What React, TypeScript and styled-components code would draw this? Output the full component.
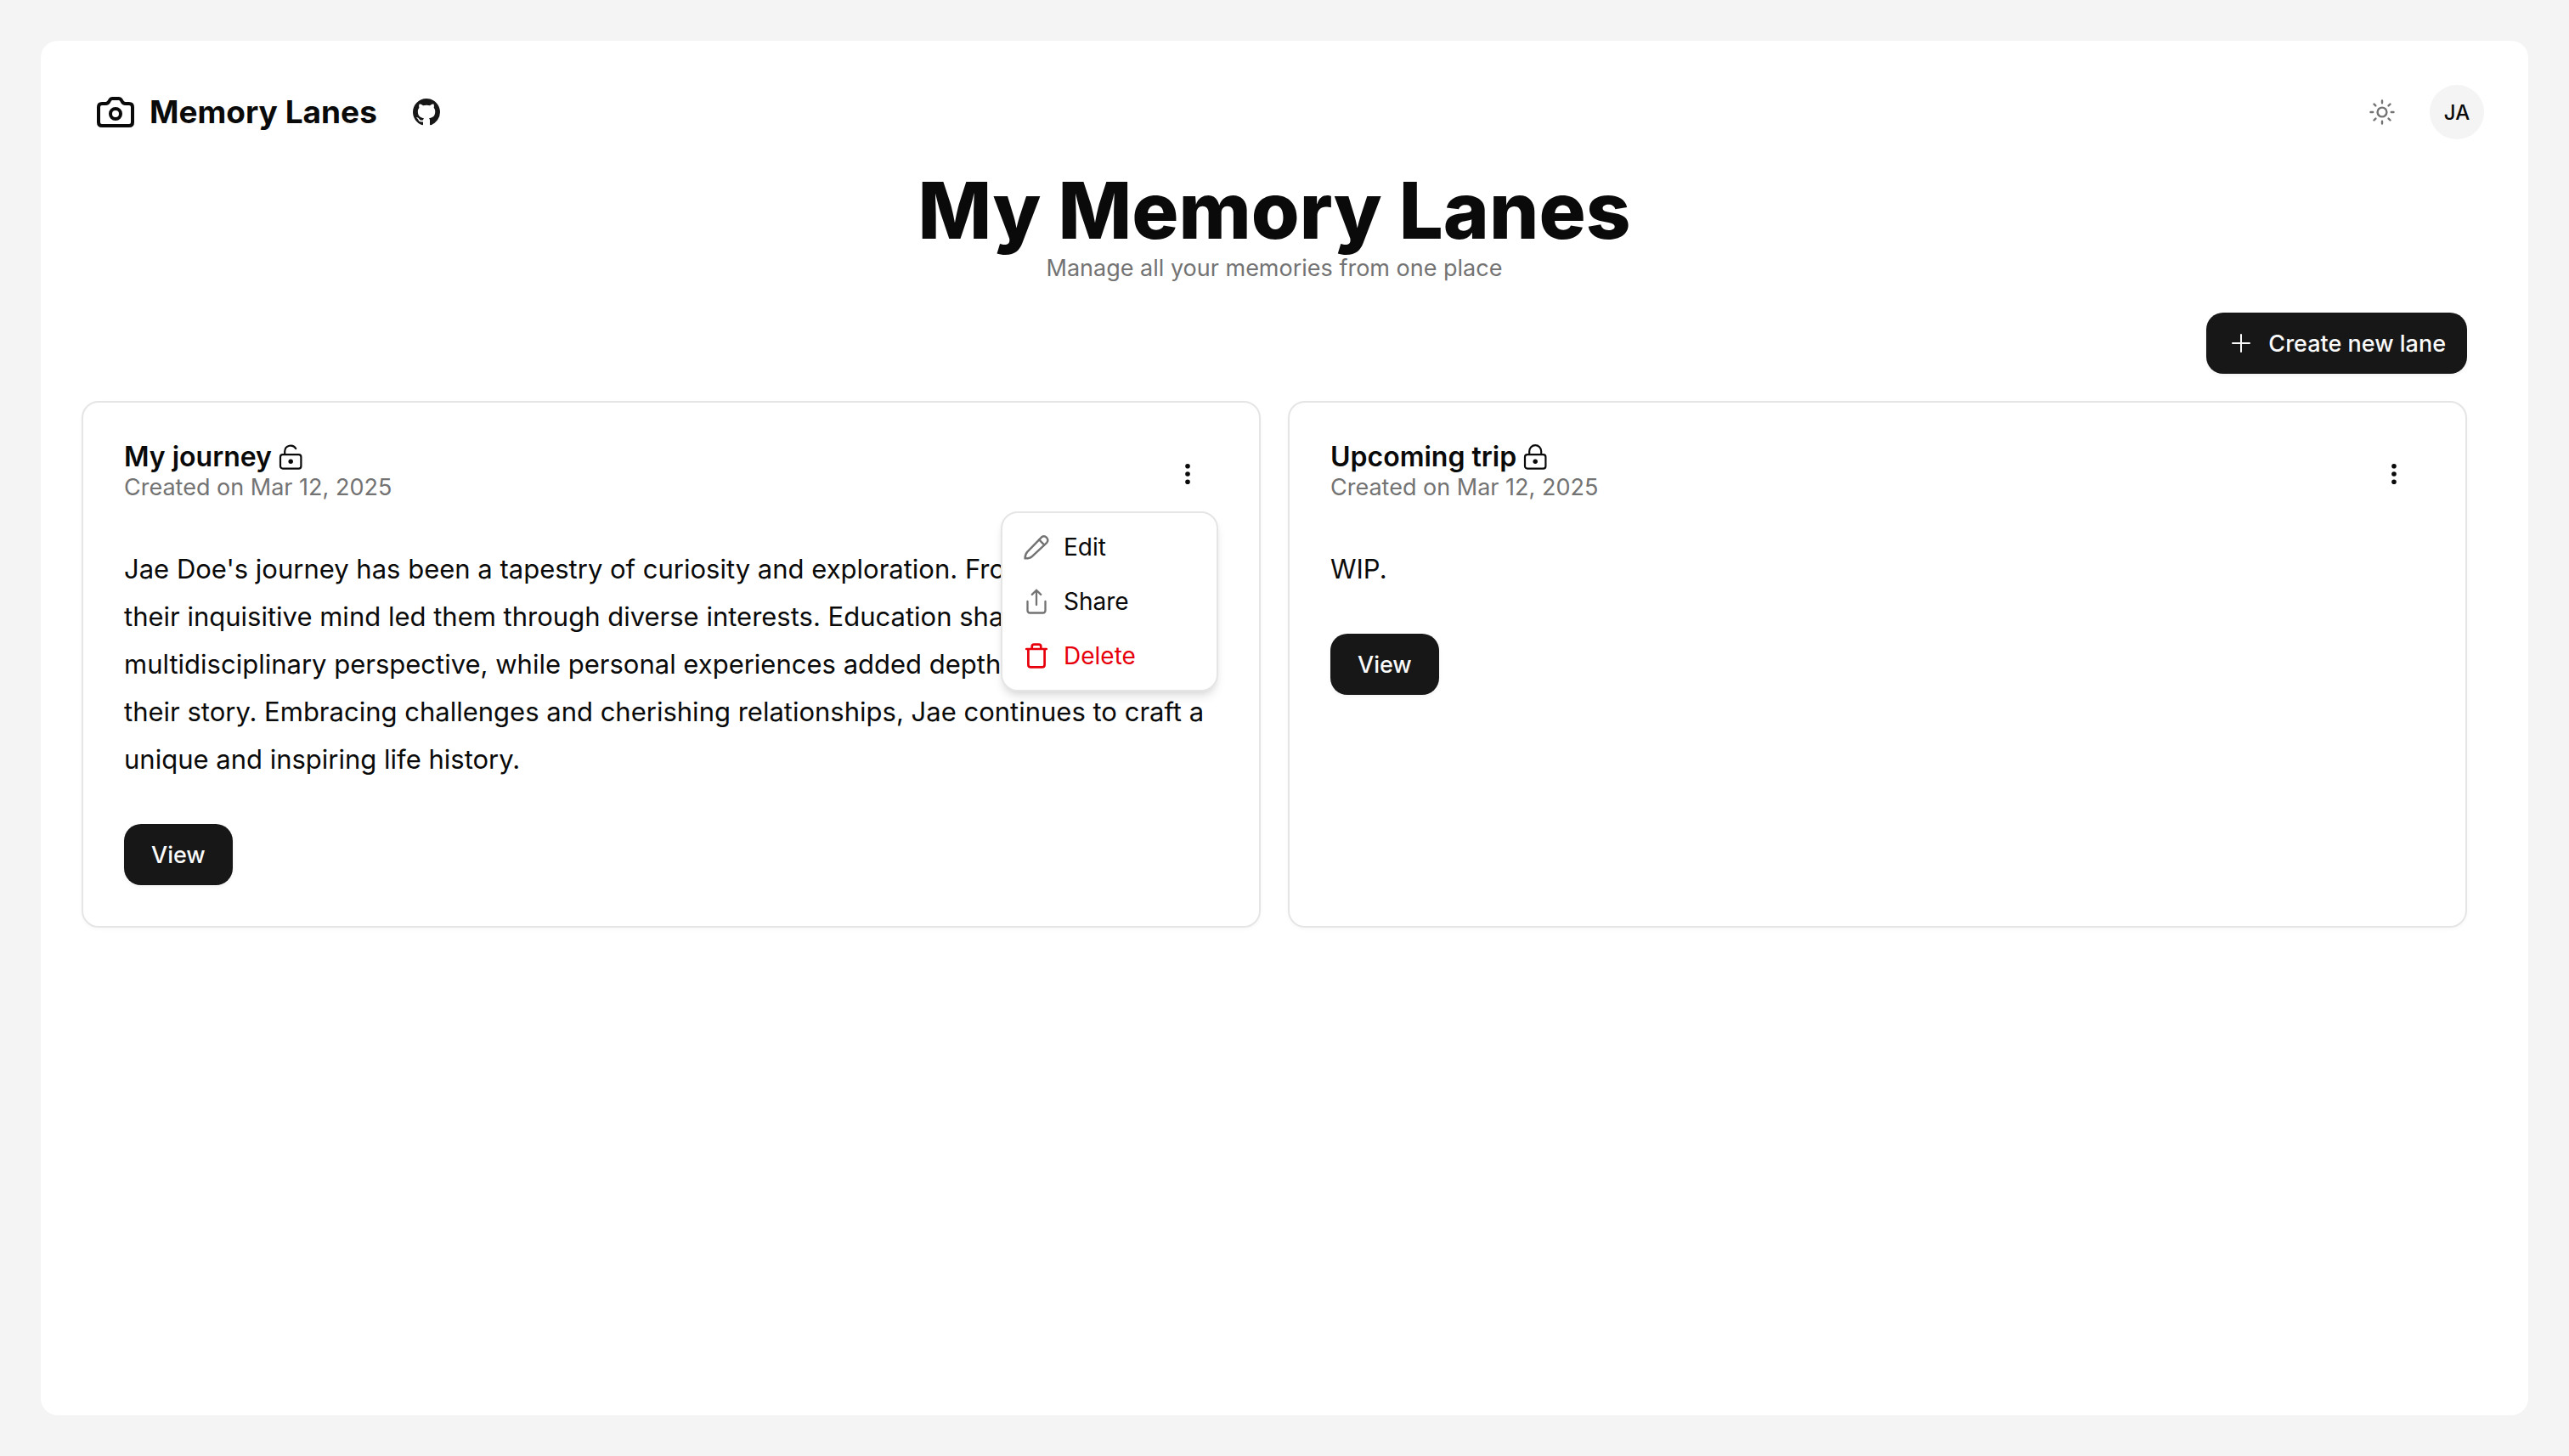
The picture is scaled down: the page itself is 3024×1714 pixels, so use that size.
import React from "react";
import styled, { createGlobalStyle } from "styled-components";

const color = {
  page: "#f4f4f4",
  surface: "#ffffff",
  ink: "#0a0a0a",
  primary: "#171717",
  onPrimary: "#fafafa",
  muted: "#737373",
  line: "#e5e5e5",
  danger: "#e7000b",
};

const GlobalStyle = createGlobalStyle`
  *, *::before, *::after { box-sizing: border-box; }
  body {
    margin: 0;
    background: ${color.page};
    color: ${color.ink};
    font-family: Inter, "Liberation Sans", sans-serif;
    -webkit-font-smoothing: antialiased;
  }
  h1, h2, p, ul { margin: 0; padding: 0; }
  button { font: inherit; color: inherit; border: 0; background: none; cursor: pointer; }
  svg { display: block; flex: none; }
`;

const Page = styled.div`
  display: flex;
  min-height: 100vh;
  padding: 48px;
`;

const Panel = styled.div`
  flex: 1;
  min-width: 0;
  background: ${color.surface};
  border-radius: 20px;
`;

const Header = styled.header`
  display: flex;
  align-items: center;
  justify-content: space-between;
  padding: 52px 52px 36px 66px;
`;

const HeaderGroup = styled.div<{ $gap: number }>`
  display: flex;
  align-items: center;
  gap: ${(p) => p.$gap}px;
`;

const Brand = styled.a`
  display: flex;
  align-items: center;
  gap: 18px;
  color: ${color.ink};
  font-size: 37px;
  line-height: 48px;
  font-weight: 700;
  text-decoration: none;
`;

const IconLink = styled.a`
  color: ${color.primary};
`;

const ThemeButton = styled.button`
  display: grid;
  place-items: center;
  width: 64px;
  height: 64px;
  padding: 0;
  color: ${color.muted};
`;

const Avatar = styled.button`
  width: 64px;
  height: 64px;
  padding: 0;
  border-radius: 50%;
  background: ${color.page};
  font-size: 24px;
  font-weight: 500;
`;

const Main = styled.main`
  display: flex;
  flex-direction: column;
  gap: 32px;
  padding: 0 72px 48px 48px;
`;

const Intro = styled.div`
  text-align: center;
`;

const PageTitle = styled.h1`
  font-size: 92px;
  line-height: 96px;
  font-weight: 800;
`;

const Subtle = styled.p`
  color: ${color.muted};
  font-size: 27px;
  line-height: 40px;
`;

const PrimaryButton = styled.button<{ $pad: number }>`
  display: inline-flex;
  align-items: center;
  gap: 16px;
  height: 72px;
  padding: 0 ${(p) => p.$pad}px;
  border-radius: 20px;
  background: ${color.primary};
  color: ${color.onPrimary};
  font-size: 27px;
  font-weight: 500;
  box-shadow: 0 2px 4px rgba(0, 0, 0, 0.05);
`;

const Actions = styled.div`
  display: flex;
  justify-content: flex-end;
`;

const Grid = styled.section`
  display: grid;
  grid-template-columns: repeat(2, minmax(0, 1fr));
  gap: 32px;
`;

const Card = styled.article`
  display: flex;
  flex-direction: column;
  align-items: flex-start;
  gap: 48px;
  padding: 48px;
  border: 2px solid ${color.line};
  border-radius: 20px;
  box-shadow: 0 2px 4px rgba(0, 0, 0, 0.03);
`;

const CardHeader = styled.div`
  position: relative;
  display: flex;
  justify-content: space-between;
  align-self: stretch;
`;

const CardTitle = styled.h2`
  display: flex;
  align-items: center;
  gap: 8px;
  font-size: 32px;
  line-height: 32px;
  font-weight: 600;
`;

const MoreButton = styled.button`
  display: grid;
  place-items: center;
  width: 72px;
  height: 72px;
  padding: 0;
`;

const CardText = styled.p`
  font-size: 31px;
  line-height: 56px;
`;

const Menu = styled.ul`
  position: absolute;
  top: calc(100% + 8px);
  right: 0;
  width: 256px;
  padding: 8px;
  list-style: none;
  background: ${color.surface};
  border: 2px solid ${color.line};
  border-radius: 20px;
  box-shadow: 0 8px 12px -2px rgba(0, 0, 0, 0.1), 0 4px 8px -4px rgba(0, 0, 0, 0.1);
`;

const MenuItem = styled.button<{ $danger?: boolean }>`
  display: flex;
  align-items: center;
  gap: 16px;
  width: 100%;
  height: 64px;
  padding: 0 16px;
  font-size: 28px;
  color: ${(p) => (p.$danger ? color.danger : color.ink)};
  svg { color: ${(p) => (p.$danger ? color.danger : color.muted)}; }
`;

const stroke = {
  fill: "none",
  stroke: "currentColor",
  strokeLinecap: "round" as const,
  strokeLinejoin: "round" as const,
  "aria-hidden": true,
};

const CameraIcon = () => (
  <svg width="44" height="36" viewBox="0 0 44 36" strokeWidth="4" {...stroke}>
    <path d="M6 8h4.6c1.7 0 2.7-.8 3.5-2.1l1-1.8C15.900 2.700 16.900 2 18.300 2h7.400c1.400 0 2.400.7 3.200 2.100l1 1.800C30.700 7.200 31.700 8 33.400 8H38q4 0 4 4v18q0 4-4 4H6q-4 0-4-4V12q0-4 4-4z" />
    <circle cx="22" cy="20" r="6" />
  </svg>
);

const GithubIcon = () => (
  <svg width="32" height="32" viewBox="0 0 16 16" fill="currentColor" aria-hidden="true">
    <path d="M8 0C3.58 0 0 3.58 0 8c0 3.54 2.29 6.53 5.47 7.59.4.07.55-.17.55-.38 0-.19-.01-.82-.01-1.49-2.01.37-2.53-.49-2.69-.94-.09-.23-.48-.94-.82-1.13-.28-.15-.68-.52-.01-.53.63-.01 1.08.58 1.23.82.72 1.21 1.87.87 2.33.66.07-.52.28-.87.51-1.07-1.78-.2-3.64-.89-3.64-3.95 0-.87.31-1.59.82-2.15-.08-.2-.36-1.02.08-2.12 0 0 .67-.21 2.2.82.64-.18 1.32-.27 2-.27s1.36.09 2 .27c1.53-1.04 2.2-.82 2.2-.82.44 1.1.16 1.92.08 2.12.51.56.82 1.27.82 2.15 0 3.07-1.87 3.75-3.65 3.95.29.25.54.73.54 1.48 0 1.07-.01 1.93-.01 2.2 0 .21.15.46.55.38A8.01 8.01 0 0 0 16 8c0-4.42-3.58-8-8-8z" />
  </svg>
);

const SunIcon = () => (
  <svg width="32" height="32" viewBox="-16 -16 32 32" strokeWidth="2.4" {...stroke}>
    <circle r="5.4" />
    <path d="M0-13.5v2.7M0 13.5v-2.7M-13.5 0h2.7M13.5 0h-2.7M-9.5-9.5l1.8 1.9M9.5-9.5l-1.9 1.9M-9.5 9.5l1.9-1.9M9.5 9.5l-1.9-1.9" />
  </svg>
);

const PlusIcon = () => (
  <svg width="32" height="32" viewBox="0 0 32 32" strokeWidth="2" {...stroke}>
    <path d="M16 6v20M6 16h20" />
  </svg>
);

const LockIcon = ({ open }: { open: boolean }) => (
  <svg width="28" height="32" viewBox="0 0 28 32" strokeWidth="2.2" {...stroke}>
    <rect x="2" y="13.2" width="24.4" height="16.4" rx="2.8" />
    <path d={open ? "M7.2 13V9.2a7 7 0 0 1 13-3.2" : "M7.2 13V9.2a7 7 0 0 1 14 0V13"} />
    <circle cx="14.2" cy="21.3" r="2.7" fill="currentColor" stroke="none" />
  </svg>
);

const DotsIcon = () => (
  <svg width="32" height="32" viewBox="0 0 32 32" fill="currentColor" aria-hidden="true">
    <circle cx="16" cy="6.7" r="2.8" />
    <circle cx="16" cy="16" r="2.8" />
    <circle cx="16" cy="25.3" r="2.8" />
  </svg>
);

const PencilIcon = () => (
  <svg width="32" height="32" viewBox="0 0 32 32" strokeWidth="2.4" {...stroke}>
    <path d="M2.6 29.4c0-3.4.6-5.6 2.700-7.700L22.100 4.300a4.500 4.500 0 0 1 6.100 6.500L10.800 27.100c-2.200 2-4.800 2.400-8.200 2.300z" />
    <path d="M19.200 7.400l5.900 6" />
  </svg>
);

const ShareIcon = () => (
  <svg width="32" height="32" viewBox="0 0 32 32" strokeWidth="2.3" {...stroke}>
    <path d="M5.5 16v10.5q0 3 3 3h15q3 0 3-3V16M16 20V2.7M10.8 7.9L16 2.7l5.2 5.2" />
  </svg>
);

const TrashIcon = () => (
  <svg width="32" height="32" viewBox="0 0 32 32" strokeWidth="2.7" {...stroke}>
    <path d="M4.2 8h23.6M10.7 8V5.2q0-2.5 2.5-2.5h5.600q2.500 0 2.500 2.500V8M6.400 8v18.400q0 3 3 3h13.200q3 0 3-3V8" />
  </svg>
);

interface Lane {
  title: string;
  open: boolean;
  date: string;
  text: string;
  menuOpen?: boolean;
}

const lanes: Lane[] = [
  {
    title: "My journey",
    open: true,
    date: "Mar 12, 2025",
    text: "Jae Doe's journey has been a tapestry of curiosity and exploration. From an early age, their inquisitive mind led them through diverse interests. Education shaped a multidisciplinary perspective, while personal experiences added depth and meaning to their story. Embracing challenges and cherishing relationships, Jae continues to craft a unique and inspiring life history.",
    menuOpen: true,
  },
  { title: "Upcoming trip", open: false, date: "Mar 12, 2025", text: "WIP." },
];

const LaneMenu = () => (
  <Menu>
    <li><MenuItem><PencilIcon />Edit</MenuItem></li>
    <li><MenuItem><ShareIcon />Share</MenuItem></li>
    <li><MenuItem $danger><TrashIcon />Delete</MenuItem></li>
  </Menu>
);

const LaneCard = ({ lane }: { lane: Lane }) => (
  <Card>
    <CardHeader>
      <div>
        <CardTitle>{lane.title}<LockIcon open={lane.open} /></CardTitle>
        <Subtle>Created on {lane.date}</Subtle>
      </div>
      <MoreButton aria-label="Lane actions" aria-expanded={!!lane.menuOpen}><DotsIcon /></MoreButton>
      {lane.menuOpen && <LaneMenu />}
    </CardHeader>
    <CardText>{lane.text}</CardText>
    <PrimaryButton $pad={32}>View</PrimaryButton>
  </Card>
);

export default function App() {
  return (
    <Page>
      <GlobalStyle />
      <Panel>
        <Header>
          <HeaderGroup $gap={42}>
            <Brand href="#"><CameraIcon />Memory Lanes</Brand>
            <IconLink href="#" aria-label="GitHub"><GithubIcon /></IconLink>
          </HeaderGroup>
          <HeaderGroup $gap={24}>
            <ThemeButton aria-label="Toggle theme"><SunIcon /></ThemeButton>
            <Avatar>JA</Avatar>
          </HeaderGroup>
        </Header>
        <Main>
          <Intro>
            <PageTitle>My Memory Lanes</PageTitle>
            <Subtle>Manage all your memories from one place</Subtle>
          </Intro>
          <Actions>
            <PrimaryButton $pad={25}><PlusIcon />Create new lane</PrimaryButton>
          </Actions>
          <Grid>
            {lanes.map((lane) => <LaneCard key={lane.title} lane={lane} />)}
          </Grid>
        </Main>
      </Panel>
    </Page>
  );
}
